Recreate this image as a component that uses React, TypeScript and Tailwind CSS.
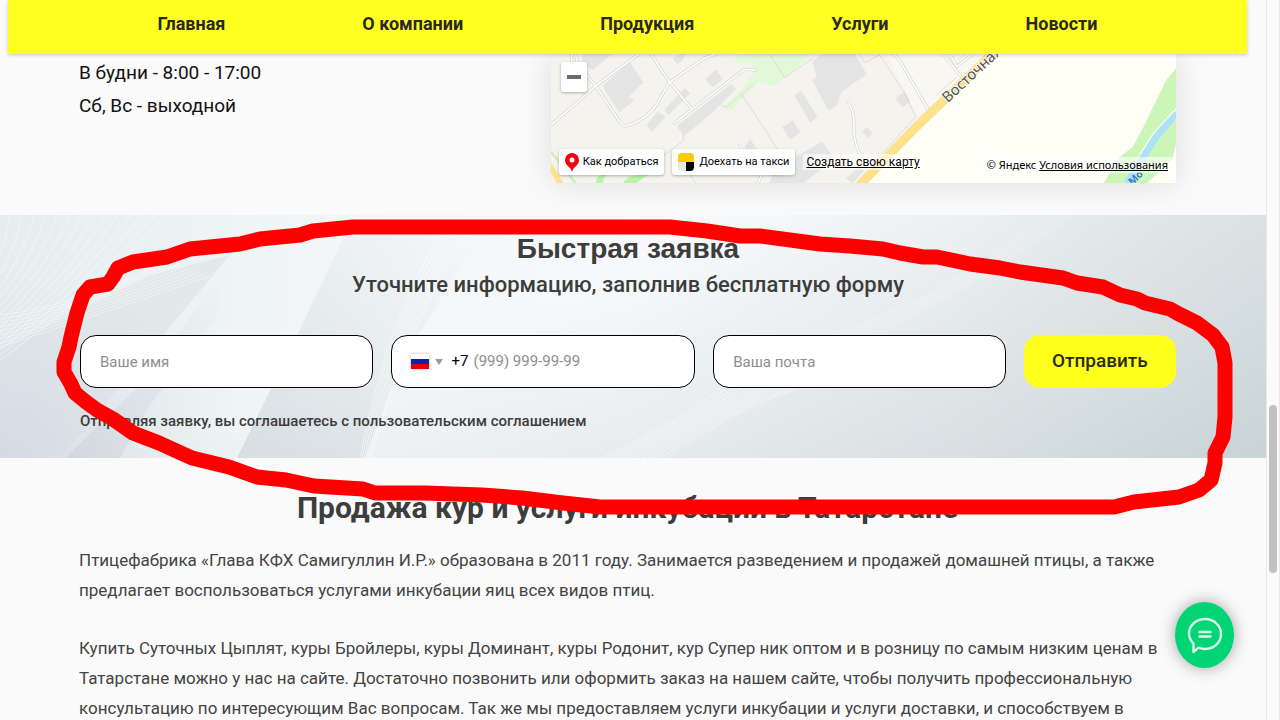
import React from 'react';

const NAV = ['Главная', 'О компании', 'Продукция', 'Услуги', 'Новости'];

const fieldClass =
  'h-[53px] w-full min-w-0 rounded-2xl border border-black bg-white text-[15px] text-gray-700 placeholder:text-[#8e8e8e] outline-none';

const Header = () => (
  <header className="relative z-10 ml-2 mr-[19px] bg-[#ffff21] shadow-[0_1px_4px_rgba(0,0,0,0.2)]">
    <nav className="flex h-[54px] items-center justify-center gap-[137px] pb-[6px]">
      {NAV.map((item) => (
        <a key={item} href="#" className="whitespace-nowrap text-lg font-bold text-[#292921]">
          {item}
        </a>
      ))}
    </nav>
  </header>
);

const MapDrawing = () => (
  <svg viewBox="36 162 1872 387" preserveAspectRatio="xMidYMid slice" className="absolute inset-0 h-full w-full" aria-hidden="true">
    <rect x="36" y="162" width="1872" height="387" fill="#f4f3ee" />
    <path d="M965 162H1400L1270 235L1165 330L1128 350L1040 162Z" fill="#f9f7f2" />
    <path d="M1340 162H1908V549H980L1165 350Z" fill="#fffff6" />

    {/* greens */}
    <path d="M585 180L600 162H818L770 205L735 235L700 258L660 245L575 332L550 325L605 270L640 222L640 186L595 192Z" fill="#e3f8d8" />
    <path d="M1908 205L1878 240L1815 370L1778 440L1740 470L1690 549H1820L1895 480L1908 430Z" fill="#ccf6b8" />
    <path d="M1908 340L1845 415L1760 549" fill="none" stroke="#aee0fb" strokeWidth="20" />
    <path d="M1908 326L1840 398L1795 470" fill="none" stroke="#fff" strokeWidth="3" />
    <path d="M170 549L175 530L200 522L190 549ZM250 549L270 530L330 522L290 549Z" fill="#baf5a5" />
    <path d="M36 455L110 549" fill="none" stroke="#c5f2b4" strokeWidth="7" />

    {/* buildings */}
    <g fill="#e4e4e5">
      <path d="M130 162H220L160 210L130 190Z" />
      <path d="M190 258L272 186L312 248L270 290L284 302L240 337Z" />
      <path d="M400 175L425 162H438L432 180L415 193Z" />
      <path d="M497 238L530 208L550 238L520 262Z" />
      <path d="M375 330L435 265L453 280L388 345Z" />
      <path d="M322 375L355 335L380 350L337 397Z" />
      <path d="M412 378L575 252L590 268L510 345L435 408Z" />
      <path d="M765 287L785 272L833 350L812 368Z" />
      <path d="M818 240L832 232L818 185L850 162H945L981 222L905 277L890 318L866 331Z" />
      <path d="M728 382L760 361L783 397L752 419Z" />
      <path d="M968 395L982 380L998 400L986 413Z" />
      <path d="M1066 295L1095 275L1112 305L1088 322Z" />
      <path d="M690 549L700 525L765 530L770 470L848 424L886 480L790 549Z" />
      <path d="M615 440L632 417L655 450L630 460Z" />
      <path d="M918 535L960 500L975 510L940 549Z" />
    </g>

    {/* thin boundaries */}
    <g fill="none" stroke="#d2d2cf" strokeWidth="2">
      <path d="M690 162L736 233L820 175M545 315L560 322L640 255M606 282L716 450M430 400L434 420L370 470M450 520L470 549M960 162L975 188L1020 165L1095 280L1128 350L1000 490" />
      <path d="M1190 285L1250 232M1255 180L1275 162" />
    </g>

    {/* streets */}
    <g fill="none" strokeLinejoin="round" strokeLinecap="round">
      <g stroke="#d3d3d3" strokeWidth="9">
        <path d="M36 375L170 258L300 162M110 162L115 190L170 258L245 370Q255 382 270 375Q340 350 365 290L390 248L495 175L530 162M335 162L392 248L458 328M405 370L458 328L610 212Q620 205 648 211M98 162V190" />
        <path d="M925 308Q943 330 943 370Q940 430 965 470M1060 165Q1075 170 1082 185L1165 328M1210 162L1262 228M1230 162L1250 200L1300 162M600 435L665 530L655 549" />
      </g>
      <g stroke="#fff" strokeWidth="5">
        <path d="M36 375L170 258L300 162M110 162L115 190L170 258L245 370Q255 382 270 375Q340 350 365 290L390 248L495 175L530 162M335 162L392 248L458 328M405 370L458 328L610 212Q620 205 648 211M98 162V190" />
        <path d="M925 308Q943 330 943 370Q940 430 965 470M1060 165Q1075 170 1082 185L1165 328M1210 162L1262 228M1230 162L1250 200L1300 162M600 435L665 530L655 549" />
      </g>
      <path d="M960 555L1130 380L1380 140" stroke="#fde28b" strokeWidth="27" />
      <path d="M30 492L70 560" stroke="#fde28b" strokeWidth="17" />
    </g>

    <g fontFamily="Noto Sans, sans-serif">
      <text transform="translate(1224 310) rotate(-43)" fontSize="44" fill="#505058" stroke="#fff" strokeWidth="5" paintOrder="stroke">
        Восточная
      </text>
      <text transform="translate(1776 556) rotate(-43)" fontSize="30" fontWeight="bold" fill="#3478cf">
        Мо
      </text>
    </g>
  </svg>
);

const Contacts = () => (
  <section className="flex justify-between pb-8 pl-[79px] pr-[90px]">
    <div className="pt-[2px] text-[19px] leading-[33px] text-[#111]">
      <p>В будни - 8:00 - 17:00</p>
      <p>Сб, Вс - выходной</p>
    </div>
    <div className="relative h-[129px] w-[57%] text-[11px] text-black shadow-[0_0_30px_rgba(0,0,0,0.12)]">
      <MapDrawing />
      <button aria-label="Уменьшить" className="absolute left-[10px] top-2 flex h-[30px] w-[26px] items-center justify-center rounded-[3px] bg-white shadow-[0_1px_3px_rgba(0,0,0,0.3)]">
        <span className="h-1 w-[14px] bg-[#6b6b6b]" />
      </button>
      <div className="absolute bottom-2 left-2 flex items-center gap-2">
        <button className="flex h-[26px] items-center gap-1 whitespace-nowrap rounded-[3px] bg-white px-[6px] shadow-[0_1px_3px_rgba(0,0,0,0.3)]">
          <svg width="14" height="19" viewBox="0 0 14 19">
            <path d="M7 0a7 7 0 0 1 7 7c0 4-3 6-5 8-1 1-1.4 2.400-2 4-.6-1.600-1-3-2-4-2-2-5-4-5-8a7 7 0 0 1 7-7z" fill="#f8000c" />
            <circle cx="7" cy="7" r="2.500" fill="#fff" />
          </svg>
          Как добраться
        </button>
        <button className="flex h-[26px] items-center gap-[5px] whitespace-nowrap rounded-[3px] bg-white px-[6px] shadow-[0_1px_3px_rgba(0,0,0,0.3)]">
          <svg width="16" height="18" viewBox="0 0 16 18">
            <path d="M0 9V4q0-4 4-4h8q4 0 4 4v5z" fill="#ffcc00" />
            <path d="M0 9h8v9H4q-4 0-4-4z" fill="#e6e6e6" />
            <path d="M8 9h8v5q0 4-4 4H8z" fill="#000" />
          </svg>
          Доехать на такси
        </button>
        <a href="#" className="whitespace-nowrap bg-white/60 px-[3px] text-xs leading-4 underline">
          Создать свою карту
        </a>
      </div>
      <p className="absolute bottom-[10px] right-1 whitespace-nowrap bg-white/60 px-1 font-['Noto_Sans',sans-serif] leading-4">
        © Яндекс <a href="#" className="underline">Условия использования</a>
      </p>
    </div>
  </section>
);

const lines = (n: number) => Array.from({ length: n }, (_, i) => i);

const Backdrop = () => (
  <svg viewBox="0 0 1266 243" preserveAspectRatio="none" className="absolute inset-0 h-full w-full" aria-hidden="true">
    <defs>
      <linearGradient id="base" x1="0" y1="0" x2="1" y2="0">
        <stop offset="0" stopColor="#e5edee" />
        <stop offset="0.25" stopColor="#f2f6f7" />
        <stop offset="0.5" stopColor="#f7f9fa" />
        <stop offset="0.75" stopColor="#f2f5f6" />
        <stop offset="1" stopColor="#e5ebec" />
      </linearGradient>
      <linearGradient id="shade" gradientUnits="userSpaceOnUse" x1="830" y1="-20" x2="990" y2="400">
        <stop offset="0" stopColor="#c6cfd5" stopOpacity="0" />
        <stop offset="1" stopColor="#bccacd" stopOpacity="0.8" />
      </linearGradient>
      <radialGradient id="corner" gradientUnits="userSpaceOnUse" cx="0" cy="0" r="1" gradientTransform="translate(0 243) scale(240 190)">
        <stop offset="0" stopColor="#d3d6e4" stopOpacity="0.8" />
        <stop offset="1" stopColor="#d9dfe4" stopOpacity="0" />
      </radialGradient>
      <linearGradient id="fold" x1="1" y1="0" x2="0" y2="1">
        <stop offset="0" stopColor="#d5dde1" stopOpacity="0" />
        <stop offset="1" stopColor="#cdd6da" stopOpacity="0.7" />
      </linearGradient>
    </defs>
    <rect width="1266" height="243" fill="url(#base)" />
    <path d="M0 135L150 60L230 40L60 243H0Z" fill="#dbe3e5" opacity="0.6" />
    <rect width="400" height="243" fill="url(#corner)" />
    <path d="M65 243L140 170L225 55L215 105L150 190L120 243Z" fill="url(#fold)" />
    <path d="M237 243L290 135L345 20H480L400 150L365 243Z" fill="url(#fold)" />
    <rect width="1266" height="243" fill="url(#shade)" />
    <g stroke="#fff" fill="none" strokeWidth="1">
      {lines(14).map((i) => (
        <path key={i} opacity="0.45" d={`M${10 + i * 12} 0Q${i * 8} 70 ${-60 + i * 4} ${125 + i * 2}`} />
      ))}
      {lines(9).map((i) => (
        <path key={i} opacity="0.4" d={`M0 ${100 + i * 4}Q80 ${90 + i * 2} ${170 + i * 5} ${45 + i * 2}`} />
      ))}
      {lines(7).map((i) => (
        <path key={i} opacity="0.5" d={`M${360 + i * 2} 243Q${385 + i * 3} 110 ${440 + i * 5} 20`} />
      ))}
      {lines(12).map((i) => (
        <path key={i} opacity="0.5" d={`M${600 + i * 6} 243Q${700 + i * 3} 195 ${720 + i * 7} 173`} />
      ))}
      {lines(12).map((i) => (
        <path key={i} opacity="0.2" d={`M${830 + i * 4} 120Q${960 + i * 3} ${75 - i} ${1040 + i * 3} 0`} />
      ))}
    </g>
  </svg>
);

const QuickRequest = () => (
  <section className="relative pb-[25px] pl-20 pr-[90px] pt-4 text-[#3d3d3d]">
    <Backdrop />
    <div className="relative">
      <h2 className="text-center font-['Liberation_Sans',sans-serif] text-[28px] font-bold leading-9">Быстрая заявка</h2>
      <p className="text-center text-[22px] font-medium leading-9">Уточните информацию, заполнив бесплатную форму</p>
      <form className="mt-8" onSubmit={(e) => e.preventDefault()}>
        <div className="grid grid-cols-[292fr_304fr_292fr_152fr] gap-[18px]">
          <input type="text" aria-label="Ваше имя" placeholder="Ваше имя" className={`${fieldClass} px-[19px]`} />
          <div className={`${fieldClass} flex items-center pl-[19px]`}>
            <button type="button" aria-label="Код страны" className="flex items-center gap-[6px]">
              <svg width="18" height="15" viewBox="0 0 18 15" className="shadow-[0_0_3px_rgba(0,0,0,0.25)]">
                <path d="M0 0h18v5H0z" fill="#fff" />
                <path d="M0 5h18v5H0z" fill="#0f1fb5" />
                <path d="M0 10h18v5H0z" fill="#ea0000" />
              </svg>
              <svg width="8" height="6" viewBox="0 0 8 6">
                <path d="M0 0h8L4 6z" fill="#9a9a9a" />
              </svg>
            </button>
            <span className="ml-[9px] text-black">+7</span>
            <input type="tel" aria-label="Телефон" placeholder="(999) 999-99-99" className="ml-[5px] w-full min-w-0 bg-transparent outline-none placeholder:text-[#8e8e8e]" />
          </div>
          <input type="email" aria-label="Ваша почта" placeholder="Ваша почта" className={`${fieldClass} px-[19px]`} />
          <button type="submit" className="h-[53px] rounded-2xl bg-[#ffff1c] text-[19px] font-medium text-[#2b2b10]">
            Отправить
          </button>
        </div>
        <p className="mt-[21px] text-[15px] font-medium leading-6">Отправляя заявку, вы соглашаетесь с пользовательским соглашением</p>
      </form>
    </div>
  </section>
);

const About = () => (
  <section className="pl-[79px] pr-[90px] pt-[30px] text-[#444]">
    <h1 className="text-center text-[30px] font-bold leading-10 text-[#3d3d3d]">Продажа кур и услуги инкубации в Татарстане</h1>
    <div className="mt-[17px] flex flex-col gap-7 whitespace-nowrap text-[17px] leading-[30px]">
      <p>
        Птицефабрика «Глава КФХ Самигуллин И.Р.» образована в 2011 году. Занимается разведением и продажей домашней птицы, а также
        <br />
        предлагает воспользоваться услугами инкубации яиц всех видов птиц.
      </p>
      <p>
        Купить Суточных Цыплят, куры Бройлеры, куры Доминант, куры Родонит, кур Супер ник оптом и в розницу по самым низким ценам в
        <br />
        Татарстане можно у нас на сайте. Достаточно позвонить или оформить заказ на нашем сайте, чтобы получить профессиональную
        <br />
        консультацию по интересующим Вас вопросам. Так же мы предоставляем услуги инкубации и услуги доставки, и способствуем в
      </p>
    </div>
  </section>
);

const ChatButton = () => (
  <button aria-label="Чат" className="absolute bottom-[52px] right-[46px] z-20 flex h-[66px] w-[59px] items-center justify-center rounded-[50%] bg-[#00d474] shadow-[0_0_16px_rgba(0,0,0,0.35)]">
    <svg width="36" height="38" viewBox="0 0 36 38" fill="none" stroke="#d9fbe9" strokeWidth="2.4" strokeLinejoin="round">
      <path d="M6.500 27.500C3.500 24.500 2 21.500 2 17.500C2 9.500 9 3 18 3s16 6.500 16 15-7 15-16 15c-2.500 0-4.500-.5-6.500-1.300L6.500 36z" />
      <path d="M11.500 16h13M11.500 20.500h13" />
    </svg>
  </button>
);

const Marker = () => (
  <svg viewBox="0 0 1280 720" className="pointer-events-none absolute inset-0 z-30 h-full w-full" fill="none" aria-hidden="true">
    <path
      d="M133 433L113 419L97 410L86 402L75 393L71 384L64 372L64 362L69 347L71 337L77 313L83 295L90 287L108 284L113 277L118 268L133 262L167 257L190 249L240 244L260 239L300 235L313 231L353 227H670L707 231L740 236H760L820 244L850 246L883 249L900 253L923 257H937L970 264L1000 268L1020 272L1063 278L1077 283L1103 287L1120 295L1137 299L1145 303L1170 309L1177 313L1197 323L1213 335L1222 347L1225 363V417L1223 437L1215 453V463L1211 480L1199 490L1179 497L1134 502L1114 507H600L563 503L522 498L482 495L424 493H375L363 489L314 486L286 480L257 477L229 467L192 458L159 443Z"
      stroke="#ff0000"
      strokeWidth="15"
      strokeLinejoin="round"
    />
  </svg>
);

export default function App() {
  return (
    <div className="relative flex h-screen overflow-hidden bg-[#fafafa] font-[Roboto,sans-serif]">
      <main className="min-w-0 flex-1 overflow-hidden">
        <Header />
        <Contacts />
        <QuickRequest />
        <About />
      </main>
      <div className="relative w-[14px] border-x border-[#e8e8e8] bg-[#fbfbfb]">
        <div className="absolute inset-x-[2px] top-[405px] h-[168px] rounded-full bg-[#c1c1c1]" />
      </div>
      <ChatButton />
      <Marker />
    </div>
  );
}
